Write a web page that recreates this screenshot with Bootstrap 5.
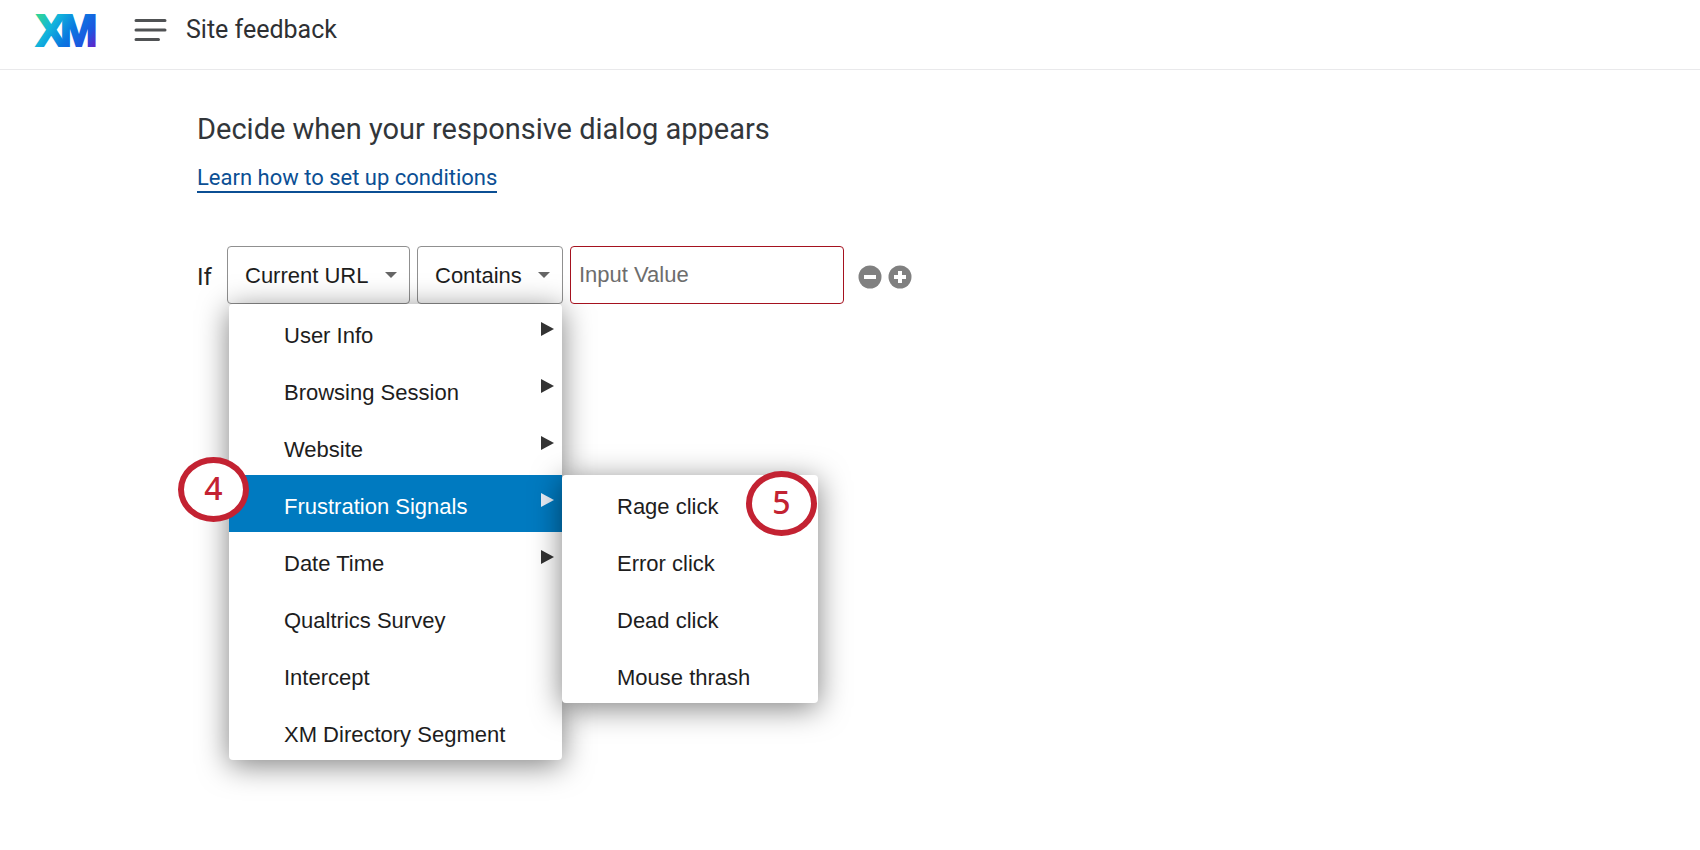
<!DOCTYPE html>
<html lang="en">
<head>
<meta charset="utf-8">
<meta name="viewport" content="width=device-width, initial-scale=1">
<title>Site feedback</title>
<link href="https://cdn.jsdelivr.net/npm/bootstrap@5.3.0/dist/css/bootstrap.min.css" rel="stylesheet">
<style>
  :root { --ui: Roboto, "Open Sans", sans-serif; --menu: "Liberation Sans", Arial, sans-serif; --red: #c32232; }
  body { font-family: var(--ui); color: #32363a; background: #fff; }
  .topbar { padding: 0 36px; height: 70px; border-bottom: 1px solid #e9e9eb; }
  .topbar-inner { height: 60px; }
  .topbar .app-title { font-size: 25px; line-height: 32px; color: #2e3033; margin-left: 19px; }
  .brand-mark, .menu-toggle svg { display: block; }
  .brand-mark { overflow: visible; }
  .menu-toggle { margin-left: 38px; }
  .content { padding: 41px 24px 40px 197px; }
  .content h1 { font-size: 29px; line-height: 36px; font-weight: 400; margin: 0 0 18px; }
  .help-link { display: inline-block; font-size: 22px; line-height: 26px; color: #0b4f94; text-decoration: none; border-bottom: 2px solid #0b4f94; }
  .rule { margin-top: 53px; gap: 7px; }
  .rule-word { font-size: 24px; color: #222; width: 23px; padding-top: 3px; }
  .picker { font-family: var(--menu); font-size: 22px; height: 58px; color: #1d1d1d; background-color: #fff; border: 1px solid #909090; border-radius: 4px; padding: 0 12px 0 17px; }
  .picker-op { width: 146px; }
  .picker-field { width: 183px; }
  select.picker { appearance: none; background-image: url("data:image/svg+xml,%3Csvg xmlns='http://www.w3.org/2000/svg' width='12' height='6'%3E%3Cpath d='M0 0h12L6 6z' fill='%23666'/%3E%3C/svg%3E"); background-repeat: no-repeat; background-position: right 12px center; }
  .value-input { font-family: var(--menu); font-size: 22px; height: 58px; width: 274px; border: 1px solid #a5121f; border-radius: 4px; padding: 0 8px; z-index: 1001; }
  .value-input::placeholder { color: #6d6d6d; }
  .flyout { font-family: var(--menu); position: absolute; margin: 0; padding: 0; list-style: none; background: #fff; border-radius: 4px; box-shadow: 0 5px 30px rgba(0,0,0,.5); z-index: 1000; }
  .flyout-main { top: 100%; left: 2px; width: 333px; }
  .flyout-sub { top: 0; left: 100%; width: 256px; }
  .flyout-item { display: flex; align-items: center; justify-content: space-between; width: 100%; height: 57px; padding: 6px 8px 0 55px; border: 0; background: none; font-size: 22px; color: #1d1d1d; text-align: left; white-space: nowrap; }
  .flyout-item svg { align-self: flex-start; margin-top: 12px; }
  .flyout-item.current { background: #007ac0; color: #fff; }
  .step { position: absolute; width: 71px; height: 65px; border: 6px solid var(--red); border-radius: 50%; background: #fff; color: var(--red); font-family: "Noto Sans", sans-serif; font-weight: 500; font-size: 32px; line-height: 49px; text-align: center; z-index: 1002; }
  .step-left { left: -51px; top: -18px; }
  .step-right { right: 1px; top: -4px; }
  .round-actions { margin-left: 7px; gap: 6px; padding-top: 3px; }
</style>
</head>
<body class="min-vh-100">
<header class="topbar">
  <div class="topbar-inner d-flex align-items-center">
    <a href="#" aria-label="XM home">
      <svg class="brand-mark" width="60" height="32" viewBox="0 0 60 32">
        <defs>
          <linearGradient id="xm" gradientUnits="userSpaceOnUse" x1="4" y1="0" x2="56" y2="38">
            <stop offset="0" stop-color="#2fd39b"/><stop offset=".25" stop-color="#12b5dc"/><stop offset=".55" stop-color="#0a78e0"/><stop offset=".8" stop-color="#1d55e0"/><stop offset="1" stop-color="#6a1fc8"/>
          </linearGradient>
        </defs>
        <g font-family="Liberation Sans, Arial, sans-serif" font-weight="700" font-size="45" fill="url(#xm)" stroke="url(#xm)" stroke-width="2">
          <text x="0" y="32">X</text><text x="24" y="32">M</text>
        </g>
      </svg>
    </a>
    <button class="menu-toggle btn p-0 border-0" aria-label="Open menu">
      <svg width="33" height="24" viewBox="0 0 33 24" stroke="#505254" stroke-width="3" stroke-linecap="round"><path d="M2 2.500H31M2 12H31M2 21.500H24.500"/></svg>
    </button>
    <span class="app-title">Site feedback</span>
  </div>
</header>
<main class="content">
  <h1>Decide when your responsive dialog appears</h1>
  <a class="help-link" href="#">Learn how to set up conditions</a>
  <form class="rule d-flex align-items-center">
    <span class="rule-word">If</span>
    <div class="position-relative">
      <button type="button" class="picker picker-field d-flex align-items-center justify-content-between" aria-haspopup="true" aria-expanded="true">Current URL
        <svg width="12" height="6"><path d="M0 0h12L6 6z" fill="#666"/></svg></button>
      <ul class="flyout flyout-main">
        <li><button type="button" class="flyout-item">User Info <svg width="13" height="14"><path d="M0 0L13 7L0 14z" fill="#333"/></svg></button></li>
        <li><button type="button" class="flyout-item">Browsing Session <svg width="13" height="14"><path d="M0 0L13 7L0 14z" fill="#333"/></svg></button></li>
        <li><button type="button" class="flyout-item">Website <svg width="13" height="14"><path d="M0 0L13 7L0 14z" fill="#333"/></svg></button></li>
        <li class="position-relative">
          <button type="button" class="flyout-item current">Frustration Signals <svg width="13" height="14"><path d="M0 0L13 7L0 14z" fill="#e8eef8"/></svg></button>
          <span class="step step-left">4</span>
          <ul class="flyout flyout-sub">
            <li class="position-relative"><button type="button" class="flyout-item">Rage click</button><span class="step step-right">5</span></li>
            <li><button type="button" class="flyout-item">Error click</button></li>
            <li><button type="button" class="flyout-item">Dead click</button></li>
            <li><button type="button" class="flyout-item">Mouse thrash</button></li>
          </ul>
        </li>
        <li><button type="button" class="flyout-item">Date Time <svg width="13" height="14"><path d="M0 0L13 7L0 14z" fill="#333"/></svg></button></li>
        <li><button type="button" class="flyout-item">Qualtrics Survey</button></li>
        <li><button type="button" class="flyout-item">Intercept</button></li>
        <li><button type="button" class="flyout-item">XM Directory Segment</button></li>
      </ul>
    </div>
    <select class="picker picker-op" aria-label="Operator"><option>Contains</option></select>
    <input class="value-input position-relative" type="text" placeholder="Input Value" aria-label="Value">
    <div class="round-actions d-flex">
      <button type="button" class="btn p-0 border-0 d-flex" aria-label="Remove condition"><svg width="24" height="24"><circle cx="12" cy="12" r="11.500" fill="#808080"/><path d="M6 12h12" stroke="#fff" stroke-width="4"/></svg></button>
      <button type="button" class="btn p-0 border-0 d-flex" aria-label="Add condition"><svg width="24" height="24"><circle cx="12" cy="12" r="11.500" fill="#808080"/><path d="M6 12h12M12 6v12" stroke="#fff" stroke-width="4"/></svg></button>
    </div>
  </form>
</main>
<script src="https://cdn.jsdelivr.net/npm/bootstrap@5.3.0/dist/js/bootstrap.bundle.min.js"></script>
</body>
</html>
